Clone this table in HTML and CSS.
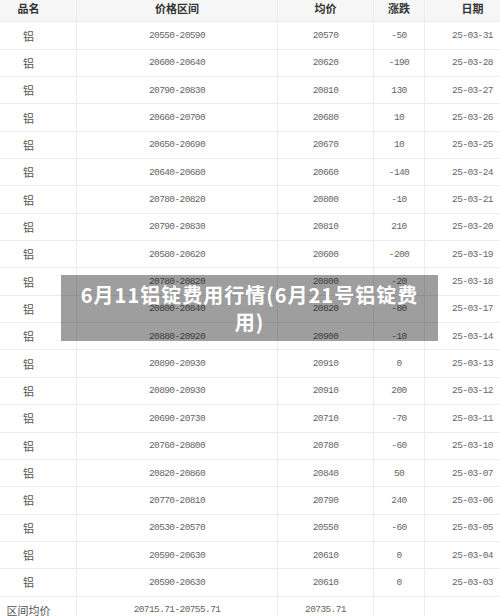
FILE: index.html
```html
<!DOCTYPE html>
<html lang="zh-CN">
<head>
<meta charset="utf-8">
<title>6月11铝锭费用行情</title>
<link rel="stylesheet" href="styles.css">
</head>
<body>
<div class="page">
  <table class="price-table">
    <colgroup>
      <col class="c-name"><col class="c-range"><col class="c-avg"><col class="c-chg"><col class="c-date">
    </colgroup>
    <thead>
      <tr><th>品名</th><th>价格区间</th><th>均价</th><th>涨跌</th><th>日期</th></tr>
    </thead>
    <tbody>
      <tr><td>铝</td><td>20550-20590</td><td>20570</td><td>-50</td><td>25-03-31</td></tr>
      <tr><td>铝</td><td>20600-20640</td><td>20620</td><td>-190</td><td>25-03-28</td></tr>
      <tr><td>铝</td><td>20790-20830</td><td>20810</td><td>130</td><td>25-03-27</td></tr>
      <tr><td>铝</td><td>20660-20700</td><td>20680</td><td>10</td><td>25-03-26</td></tr>
      <tr><td>铝</td><td>20650-20690</td><td>20670</td><td>10</td><td>25-03-25</td></tr>
      <tr><td>铝</td><td>20640-20680</td><td>20660</td><td>-140</td><td>25-03-24</td></tr>
      <tr><td>铝</td><td>20780-20820</td><td>20800</td><td>-10</td><td>25-03-21</td></tr>
      <tr><td>铝</td><td>20790-20830</td><td>20810</td><td>210</td><td>25-03-20</td></tr>
      <tr><td>铝</td><td>20580-20620</td><td>20600</td><td>-200</td><td>25-03-19</td></tr>
      <tr><td>铝</td><td>20780-20820</td><td>20800</td><td>-20</td><td>25-03-18</td></tr>
      <tr><td>铝</td><td>20800-20840</td><td>20820</td><td>-80</td><td>25-03-17</td></tr>
      <tr><td>铝</td><td>20880-20920</td><td>20900</td><td>-10</td><td>25-03-14</td></tr>
      <tr><td>铝</td><td>20890-20930</td><td>20910</td><td>0</td><td>25-03-13</td></tr>
      <tr><td>铝</td><td>20890-20930</td><td>20910</td><td>200</td><td>25-03-12</td></tr>
      <tr><td>铝</td><td>20690-20730</td><td>20710</td><td>-70</td><td>25-03-11</td></tr>
      <tr><td>铝</td><td>20760-20800</td><td>20780</td><td>-60</td><td>25-03-10</td></tr>
      <tr><td>铝</td><td>20820-20860</td><td>20840</td><td>50</td><td>25-03-07</td></tr>
      <tr><td>铝</td><td>20770-20810</td><td>20790</td><td>240</td><td>25-03-06</td></tr>
      <tr><td>铝</td><td>20530-20570</td><td>20550</td><td>-60</td><td>25-03-05</td></tr>
      <tr><td>铝</td><td>20590-20630</td><td>20610</td><td>0</td><td>25-03-04</td></tr>
      <tr><td>铝</td><td>20590-20630</td><td>20610</td><td>0</td><td>25-03-03</td></tr>
      <tr><td>区间均价</td><td>20715.71-20755.71</td><td>20735.71</td><td></td><td></td></tr>
    </tbody>
  </table>
  <div class="banner">6月11铝锭费用行情(6月21号铝锭费用)</div>
</div>
</body>
</html>
```

FILE: styles.css
```css
html, body {
  margin: 0;
  padding: 0;
  background: #fff;
  overflow: hidden;
}
.page {
  position: relative;
  width: 500px;
  height: 616px;
  overflow: hidden;
}
.price-table {
  width: 540px;
  margin: -6px 0 0 -20px;
  border-collapse: collapse;
  table-layout: fixed;
}
.c-name { width: 96px; }
.c-range { width: 201px; }
.c-avg { width: 96px; }
.c-chg { width: 51px; }
.c-date { width: 96px; }
.price-table th,
.price-table td {
  border: 1px solid #ececec;
  height: 26.35px;
  padding: 0;
  text-align: center;
  vertical-align: middle;
}
.price-table th {
  background: #f6f6f6;
  color: #333;
  font-family: "Noto Sans CJK SC", sans-serif;
  font-weight: bold;
  font-size: 11px;
}
.price-table td {
  color: #666;
  font-family: "Liberation Mono", "Noto Sans CJK SC", monospace;
  font-size: 9.5px;
  letter-spacing: -0.6px;
}
.price-table td:first-child {
  font-family: "Noto Sans CJK SC", sans-serif;
  font-size: 11px;
  letter-spacing: 0;
  color: #555;
}
.banner {
  position: absolute;
  left: 61px;
  top: 275px;
  width: 377px;
  height: 66px;
  box-sizing: border-box;
  padding: 6px 12px;
  background: rgba(0, 0, 0, 0.38);
  color: #fff;
  font-family: "Noto Sans CJK SC", sans-serif;
  font-weight: bold;
  font-size: 20px;
  letter-spacing: 1px;
  line-height: 27px;
  text-align: center;
}
```
